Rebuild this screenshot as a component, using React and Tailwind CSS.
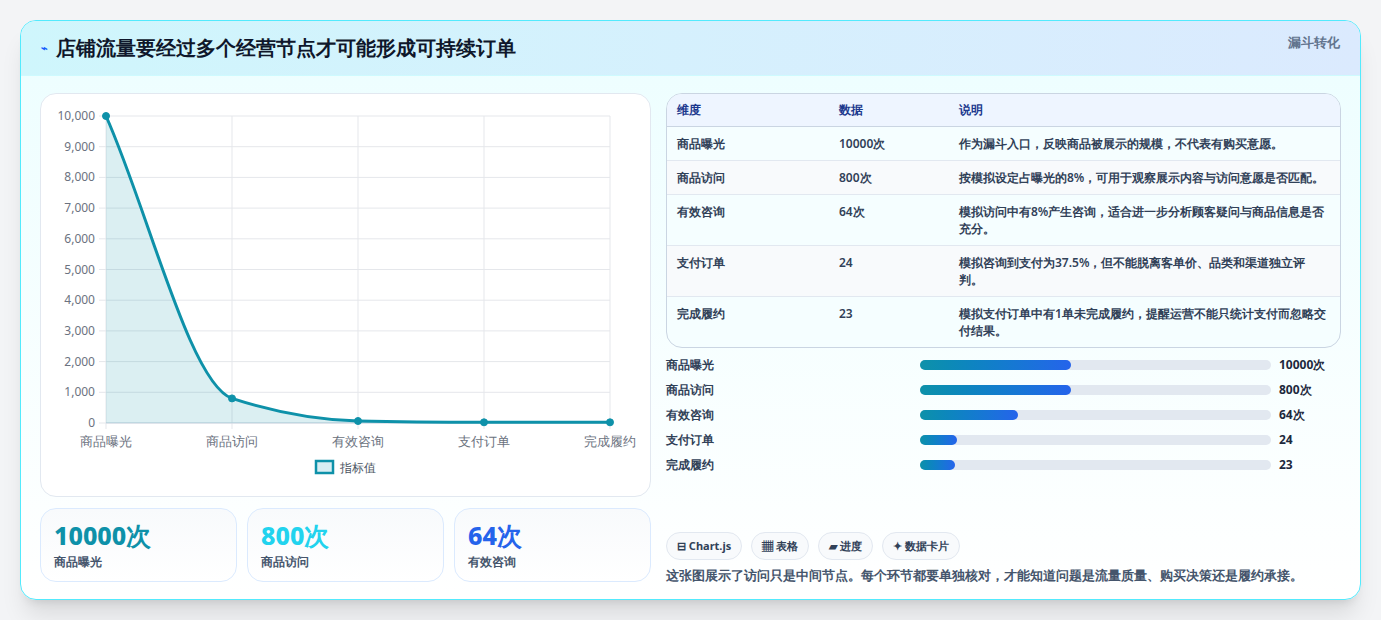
import React from "react";

const rows = [
  { k: "商品曝光", v: "10000次", d: "作为漏斗入口，反映商品被展示的规模，不代表有购买意愿。" },
  { k: "商品访问", v: "800次", d: "按模拟设定占曝光的8%，可用于观察展示内容与访问意愿是否匹配。" },
  { k: "有效咨询", v: "64次", d: "模拟访问中有8%产生咨询，适合进一步分析顾客疑问与商品信息是否充分。" },
  { k: "支付订单", v: "24", d: "模拟咨询到支付为37.5%，但不能脱离客单价、品类和渠道独立评判。" },
  { k: "完成履约", v: "23", d: "模拟支付订单中有1单未完成履约，提醒运营不能只统计支付而忽略交付结果。" },
];
const bars = [
  { k: "商品曝光", v: "10000次", w: 43 },
  { k: "商品访问", v: "800次", w: 43 },
  { k: "有效咨询", v: "64次", w: 28 },
  { k: "支付订单", v: "24", w: 10.5 },
  { k: "完成履约", v: "23", w: 10 },
];

function Chart() {
  const xs = [65, 191, 317, 443, 569];
  const ys = [22, 304.4, 327, 328.3, 328.3];
  const labels = ["商品曝光", "商品访问", "有效咨询", "支付订单", "完成履约"];
  const ticks = [0, 1, 2, 3, 4, 5, 6, 7, 8, 9, 10];
  const line = "M65,22 C107,116 149,290 191,304.4 C233,318 275,326 317,327 C359,328 401,328.3 443,328.3 L569,328.3";
  return (
    <svg width="610" height="403" className="block">
      {ticks.map(t => {
        const y = 329 - t * 30.7;
        return (
          <g key={t}>
            <line x1="58" x2="569" y1={y} y2={y} stroke="#e5e7eb" />
            <text x="54" y={y + 4} fontSize="12" textAnchor="end" fill="#6b7280">{t === 0 ? "0" : t === 10 ? "10,000" : `${t},000`}</text>
          </g>
        );
      })}
      {xs.map(x => <line key={x} x1={x} x2={x} y1="22" y2="335" stroke="#e5e7eb" />)}
      <line x1="65" x2="569" y1="329" y2="329" stroke="#cbd5e1" />
      <path d={line + " L569,329 L65,329 Z"} fill="#0e91a9" fillOpacity="0.15" />
      <path d={line} fill="none" stroke="#0e91a9" strokeWidth="3" />
      {xs.map((x, i) => <circle key={x} cx={x} cy={ys[i]} r="3.5" fill="#0e91a9" stroke="#0e91a9" />)}
      {labels.map((l, i) => <text key={l} x={xs[i]} y="352" fontSize="13" textAnchor="middle" fill="#6b7280">{l}</text>)}
      <rect x="275" y="367" width="17" height="12" fill="#d9eef3" stroke="#0e91a9" strokeWidth="2.5" />
      <text x="299" y="378" fontSize="12" fill="#4b5563">指标值</text>
    </svg>
  );
}

export default function App() {
  return (
    <div className="w-[1381px] h-[620px] bg-[#f3f4f6] p-5 font-['Noto_Sans_CJK_SC','Noto_Sans',sans-serif] text-slate-800">
      <div className="rounded-2xl border border-cyan-300 overflow-hidden bg-gradient-to-b from-[#ecfeff] to-white shadow-xl h-[580px]">
        <div className="h-[55px] px-5 flex items-center justify-between bg-gradient-to-r from-[#cff6fc] to-[#dbeafe] border-b border-cyan-100">
          <h1 className="text-[20px] font-bold text-slate-900 flex items-center gap-2"><span className="text-[11px] text-blue-600">⌁</span>店铺流量要经过多个经营节点才可能形成可持续订单</h1>
          <span className="text-[13px] font-bold text-slate-500 self-start mt-[12px]">漏斗转化</span>
        </div>
        <div className="flex gap-[15px] px-[19px] pt-[17px]">
          <div className="w-[611px] flex flex-col gap-[11px]">
            <div className="h-[404px] rounded-2xl border border-slate-200 bg-white"><Chart /></div>
            <div className="grid grid-cols-3 gap-[10px]">
              {[["10000次", "text-[#0e91a9]", "商品曝光"], ["800次", "text-[#22d3ee]", "商品访问"], ["64次", "text-[#2563eb]", "有效咨询"]].map(([v, c, l]) => (
                <div key={l} className="h-[74px] rounded-2xl border border-blue-100 bg-gradient-to-b from-[#f8fafc] to-white px-[13px] pt-[8px]">
                  <div className={`text-[25px] font-extrabold leading-[36px] ${c}`}>{v}</div>
                  <div className="text-[12px] text-slate-600 font-semibold">{l}</div>
                </div>
              ))}
            </div>
          </div>
          <div className="flex-1 flex flex-col">
            <div className="rounded-2xl border border-slate-300 overflow-hidden text-[12px] bg-[#f5feff]">
              <div className="flex h-[33px] items-center bg-[#eef5ff] border-b border-slate-300 text-blue-900 font-semibold">
                <div className="w-[172px] pl-[10px]">维度</div><div className="w-[120px]">数据</div><div className="flex-1">说明</div>
              </div>
              {rows.map((r, i) => (
                <div key={r.k} className={`flex py-[8px] ${i ? "border-t border-slate-200" : ""} ${i % 2 ? "bg-[#f8fafc]" : ""} font-semibold text-slate-700`}>
                  <div className="w-[172px] pl-[10px] leading-[17px]">{r.k}</div>
                  <div className="w-[120px] leading-[17px]">{r.v}</div>
                  <div className="flex-1 pr-[12px] leading-[17px]">{r.d}</div>
                </div>
              ))}
            </div>
            <div className="mt-[8px] flex flex-col gap-[7px]">
              {bars.map(b => (
                <div key={b.k} className="flex items-center h-[18px] text-[12px] font-semibold">
                  <div className="w-[254px] text-slate-700">{b.k}</div>
                  <div className="w-[351px] h-[10px] rounded-full bg-[#e2e8f0]">
                    <div className="h-full rounded-full bg-gradient-to-r from-[#0e91a9] to-[#2563eb]" style={{ width: `${b.w}%` }} />
                  </div>
                  <div className="ml-2 font-bold text-slate-800">{b.v}</div>
                </div>
              ))}
            </div>
            <div className="mt-[58px] flex gap-[9px] text-[11px] font-bold text-slate-700">
              {["⊟ Chart.js", "▦ 表格", "▰ 进度", "✦ 数据卡片"].map(p => (
                <span key={p} className="h-[28px] px-[10px] flex items-center rounded-full border border-slate-200 bg-slate-50">{p}</span>
              ))}
            </div>
            <p className="mt-[6px] text-[13px] font-semibold text-slate-600">这张图展示了访问只是中间节点。每个环节都要单独核对，才能知道问题是流量质量、购买决策还是履约承接。</p>
          </div>
        </div>
      </div>
    </div>
  );
}
